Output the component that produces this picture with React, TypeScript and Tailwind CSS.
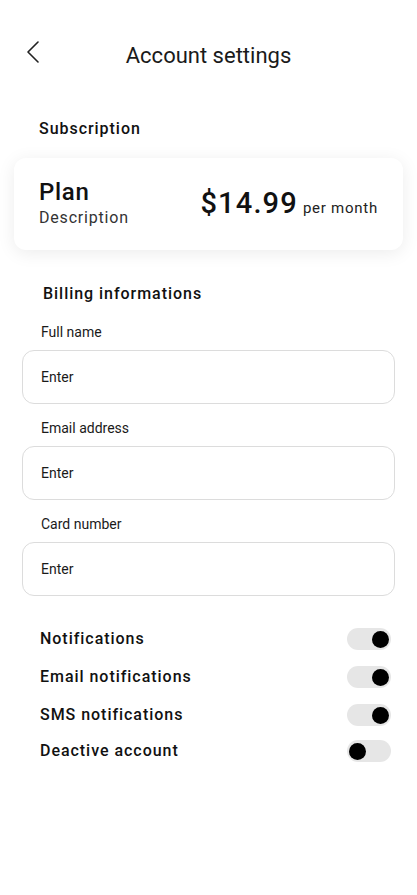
function Field({ label }: { label: string }) {
  return (
    <div className="flex flex-col">
      <label className="pl-[41px] text-[14px] leading-[16px] text-[#1a1a1a]">{label}</label>
      <div className="mx-[22px] mt-[10px] h-[54px] rounded-[12px] border border-[#dcdcdc] flex items-center px-[18px]">
        <span className="text-[14px] text-[#1a1a1a]">Enter</span>
      </div>
    </div>
  );
}

function Toggle({ label, on, className }: { label: string; on: boolean; className?: string }) {
  return (
    <div className={`h-[24px] flex items-center justify-between pl-[40px] pr-[26px] ${className ?? ""}`}>
      <span className="text-[16px] leading-[24px] font-medium tracking-[0.06em] text-[#111]">{label}</span>
      <div
        className={`w-[44px] h-[22px] rounded-full bg-[#e6e6e6] flex items-center px-[2px] ${
          on ? "justify-end" : "justify-start"
        }`}
      >
        <div className="w-[17px] h-[17px] rounded-full bg-black" />
      </div>
    </div>
  );
}

export default function App() {
  return (
    <div
      className="w-[417px] min-h-[895px] bg-white text-[#111] pt-[44px]"
      style={{ fontFamily: "Roboto, 'Liberation Sans', sans-serif" }}
    >
      {/* Header */}
      <header className="relative h-[24px] flex items-center justify-center">
        <svg
          className="absolute left-[26px] -top-[3px]"
          width="14"
          height="22"
          viewBox="0 0 14 22"
          fill="none"
          stroke="#222"
          strokeWidth="1.6"
          strokeLinecap="round"
          strokeLinejoin="round"
        >
          <polyline points="12,1 2,11 12,21" />
        </svg>
        <h1 className="text-[22px] leading-[24px] font-normal text-[#1a1a1a]">Account settings</h1>
      </header>

      <div className="pl-[39px] mt-[51px]">
        <h2 className="text-[16px] leading-[20px] font-medium tracking-[0.06em]">Subscription</h2>
      </div>

      {/* Plan card */}
      <div className="mx-[14px] mt-[19px] h-[92px] rounded-[12px] bg-white shadow-[0_3px_18px_rgba(0,0,0,0.08)] flex items-center justify-between pl-[25px] pr-[25px]">
        <div className="flex flex-col">
          <span className="text-[24px] font-medium leading-[26px] tracking-[0.03em]">Plan</span>
          <span className="mt-[2px] text-[16px] leading-[22px] tracking-[0.05em] text-[#333]">
            Description
          </span>
        </div>
        <div className="flex items-baseline gap-[5px]">
          <span className="text-[29px] font-medium tracking-[0.04em]">$14.99</span>
          <span className="text-[15px] tracking-[0.05em] text-[#222]">per month</span>
        </div>
      </div>

      <div className="pl-[43px] mt-[34px]">
        <h2 className="text-[16px] leading-[20px] font-medium tracking-[0.06em]">Billing informations</h2>
      </div>

      <div className="mt-[20px] flex flex-col gap-[16px]">
        <Field label="Full name" />
        <Field label="Email address" />
        <Field label="Card number" />
      </div>

      <div className="mt-[31px] flex flex-col">
        <Toggle label="Notifications" on />
        <Toggle label="Email notifications" on className="mt-[14px]" />
        <Toggle label="SMS notifications" on className="mt-[14px]" />
        <Toggle label="Deactive account" on={false} className="mt-[12px]" />
      </div>
    </div>
  );
}
